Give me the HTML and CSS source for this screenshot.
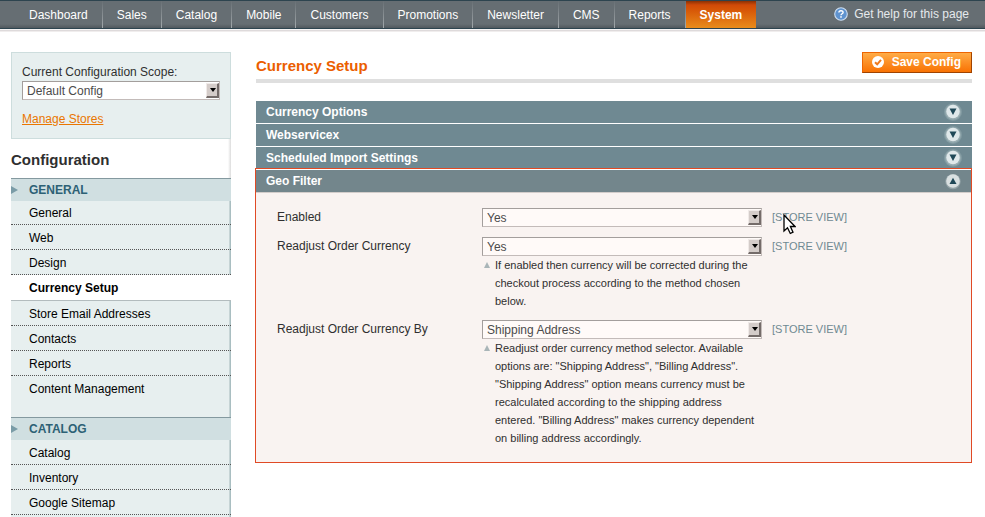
FILE: index.html
```html
<!DOCTYPE html>
<html lang="en">
<head>
<meta charset="utf-8">
<title>Currency Setup</title>
<link rel="stylesheet" href="styles.css">
</head>
<body>
<header class="topbar">
  <nav class="menu">
    <a href="#">Dashboard</a>
    <a href="#">Sales</a>
    <a href="#">Catalog</a>
    <a href="#">Mobile</a>
    <a href="#">Customers</a>
    <a href="#">Promotions</a>
    <a href="#">Newsletter</a>
    <a href="#">CMS</a>
    <a href="#">Reports</a>
    <a href="#" class="active">System</a>
  </nav>
  <a href="#" class="help">
    <svg width="14" height="14" viewBox="0 0 14 14" aria-hidden="true">
      <circle cx="7" cy="7" r="6.3" fill="#5f93cf" stroke="#cfdff0" stroke-width="1.1"/>
      <path d="M4.9 5.6C4.9 3.2 9.1 3.2 9.1 5.4C9.1 6.8 7 6.7 7 8.2" fill="none" stroke="#fff" stroke-width="1.4"/>
      <rect x="6.2" y="9.2" width="1.6" height="1.5" fill="#fff"/>
    </svg>
    Get help for this page
  </a>
</header>

<div class="page">
  <aside class="sidebar">
    <div class="scope">
      <label for="scope">Current Configuration Scope:</label>
      <span class="select"><select id="scope"><option>Default Config</option></select></span>
      <a href="#">Manage Stores</a>
    </div>
    <h3>Configuration</h3>
    <h4>GENERAL</h4>
    <ul>
      <li><a href="#">General</a></li>
      <li><a href="#">Web</a></li>
      <li><a href="#">Design</a></li>
      <li class="current"><a href="#">Currency Setup</a></li>
      <li><a href="#">Store Email Addresses</a></li>
      <li><a href="#">Contacts</a></li>
      <li><a href="#">Reports</a></li>
      <li class="last"><a href="#">Content Management</a></li>
    </ul>
    <h4>CATALOG</h4>
    <ul class="fill">
      <li><a href="#">Catalog</a></li>
      <li><a href="#">Inventory</a></li>
      <li><a href="#">Google Sitemap</a></li>
    </ul>
  </aside>

  <main class="main">
    <div class="heading">
      <h1>Currency Setup</h1>
      <button type="button" class="save">
        <svg width="12" height="12" viewBox="0 0 12 12" aria-hidden="true">
          <circle cx="6" cy="6" r="6" fill="#fff"/>
          <path d="M3 6.2L5.2 8.3L9 3.8" fill="none" stroke="#ef7a1c" stroke-width="2"/>
        </svg>
        Save Config
      </button>
    </div>

    <div class="sections">
      <button type="button" class="bar">Currency Options
        <svg width="18" height="18" viewBox="0 0 18 18" aria-hidden="true"><circle cx="9" cy="9" r="9" fill="#819aa1"/><circle cx="9" cy="9" r="7.8" fill="#99adb2"/><circle cx="9" cy="8.5" r="6.7" fill="#dfe8ea"/><path d="M5.5 5.5H12.5L9 12Z" fill="#1f4857"/></svg>
      </button>
      <button type="button" class="bar">Webservicex
        <svg width="18" height="18" viewBox="0 0 18 18" aria-hidden="true"><circle cx="9" cy="9" r="9" fill="#819aa1"/><circle cx="9" cy="9" r="7.8" fill="#99adb2"/><circle cx="9" cy="8.5" r="6.7" fill="#dfe8ea"/><path d="M5.5 5.5H12.5L9 12Z" fill="#1f4857"/></svg>
      </button>
      <button type="button" class="bar">Scheduled Import Settings
        <svg width="18" height="18" viewBox="0 0 18 18" aria-hidden="true"><circle cx="9" cy="9" r="9" fill="#819aa1"/><circle cx="9" cy="9" r="7.8" fill="#99adb2"/><circle cx="9" cy="8.5" r="6.7" fill="#dfe8ea"/><path d="M5.5 5.5H12.5L9 12Z" fill="#1f4857"/></svg>
      </button>
    </div>

    <section class="open">
      <button type="button" class="bar">Geo Filter
        <svg width="16" height="18" viewBox="0 0 16 18" aria-hidden="true"><circle cx="8" cy="9.6" r="7.7" fill="#94a4a8"/><circle cx="8" cy="9" r="6.8" fill="#d9e0e1"/><path d="M4.5 12H11.5L8 5.8Z" fill="#1f4857"/></svg>
      </button>
      <div class="fields">
        <label for="enabled">Enabled</label>
        <span class="select"><select id="enabled"><option>Yes</option><option>No</option></select></span>
        <span class="level">[STORE VIEW]
          <svg class="pointer" width="13" height="21" viewBox="0 0 13 21" aria-hidden="true"><path d="M1 1V17L4.5 13.8L7.3 19.5L10 18.2L7.4 12.5H12Z" fill="#fff" stroke="#000" stroke-width="1.3"/></svg>
        </span>

        <label for="readjust">Readjust Order Currency</label>
        <div>
          <span class="select"><select id="readjust"><option>Yes</option><option>No</option></select></span>
          <p class="note">If enabled then currency will be corrected during the checkout process according to the method chosen below.</p>
        </div>
        <span class="level">[STORE VIEW]</span>

        <label for="method">Readjust Order Currency By</label>
        <div>
          <span class="select"><select id="method"><option>Shipping Address</option><option>Billing Address</option></select></span>
          <p class="note">Readjust order currency method selector. Available options are: "Shipping Address", "Billing Address". "Shipping Address" option means currency must be recalculated according to the shipping address entered. "Billing Address" makes currency dependent on billing address accordingly.</p>
        </div>
        <span class="level">[STORE VIEW]</span>
      </div>
    </section>
  </main>
</div>
</body>
</html>
```
FILE: styles.css
```css
*, ::before, ::after {
  box-sizing: border-box;
}

body {
  display: flex;
  flex-direction: column;
  min-height: 100vh;
  margin: 0;
  background: #fff;
  color: #2f2f2f;
  font: 12px/18px "Liberation Sans", Arial, sans-serif;
}

h1, h3, h4, ul, p {
  margin: 0;
  padding: 0;
}

button, select {
  font: inherit;
  border-radius: 0;
}

.topbar {
  display: flex;
  justify-content: space-between;
  height: 29px;
  padding: 0 16px 0 15px;
  border-top: 1px solid #2d444f;
  border-bottom: 1px solid #2d444f;
  background: linear-gradient(#666e73 0 23px, #50585e);
  box-shadow: 0 1px #f6f4f4, 0 2px #dedadb, 0 3px #f0eded;
}

.topbar a {
  color: #fff;
  text-decoration: none;
}

.menu {
  display: flex;
}

.menu a {
  padding: 5px 14px 4px;
  border-right: 1px solid;
  border-image: linear-gradient(#666e73, #a5abae) 1;
}

.menu .active {
  border: 0;
  background: linear-gradient(#8a3104, #d04a08 4px, #d85a08 10px, #e98c1b);
  font-weight: bold;
}

.topbar .help {
  display: flex;
  gap: 6px;
  padding-top: 4px;
  color: #e5e9ec;
}

.help svg {
  margin-top: 2px;
}

.page {
  display: grid;
  flex: 1;
  grid-template-columns: 220px 1fr;
  gap: 24px;
  padding: 23px 13px 0 11px;
}

.sidebar {
  display: flex;
  flex-direction: column;
  background: linear-gradient(to right, #fff, #dcdcdc) right / 3px 100% no-repeat;
}

.scope {
  display: flex;
  flex-direction: column;
  align-items: flex-start;
  height: 87px;
  padding: 10px;
  border: 1px solid #cddddd;
  background: #e7efef;
}

.scope a {
  margin-top: 10px;
  color: #ea7601;
}

.select {
  position: relative;
  display: block;
  width: 100%;
  height: 19px;
}

.select select {
  display: block;
  width: 100%;
  height: 19px;
  padding: 0 16px 0 4px;
  border: 1px solid;
  border-color: #a39e9c #c3bbb9 #c3bbb9 #a39e9c;
  background: #fffaf8;
  color: #4b4b4b;
  line-height: 16px;
  appearance: none;
}

.scope .select select {
  background: #fff;
}

.select::before {
  content: "";
  position: absolute;
  top: 2px;
  right: 1px;
  width: 13px;
  height: 15px;
  border: 1px solid;
  border-width: 1px 2px 2px 1px;
  border-color: #f0eae8 #746b69 #746b69 #f0eae8;
  background: #d4ccc9;
  pointer-events: none;
}

.select::after {
  content: "";
  position: absolute;
  top: 7px;
  right: 4px;
  border: 3px solid transparent;
  border-top: 4px solid #000;
  border-bottom: 0;
  pointer-events: none;
}

.sidebar h3 {
  padding: 12px 0 9px;
  font-size: 15px;
}

.sidebar h4 {
  height: 23px;
  padding: 2px 0 2px 18px;
  border-top: 1px solid #84999f;
  background: #d0dfe1;
  color: #2d6175;
  font-size: 12px;
}

.sidebar h4::before {
  content: "";
  float: left;
  margin: 5px 0 0 -18px;
  border: 4px solid transparent;
  border-left: 7px solid #7a9ca7;
  border-right: 0;
}

.sidebar ul {
  padding-bottom: 17px;
  background: linear-gradient(to right, #c6d4d5 1px, #a9bec1 1px) right / 2px 100% no-repeat #e7efef;
  list-style: none;
}

.sidebar .fill {
  flex: 1;
  padding-bottom: 0;
}

.sidebar li {
  height: 25px;
  padding: 4px 0 2px 18px;
  border-bottom: 1px dotted #555;
}

.sidebar li:first-child {
  height: 24px;
  padding-top: 3px;
}

.sidebar .fill li:first-child {
  height: 25px;
  padding-top: 4px;
}

.sidebar li a {
  color: #000;
  text-decoration: none;
}

.sidebar .current {
  height: 26px;
  border-bottom: 1px solid #b3bcbe;
  background: #fff;
  font-weight: bold;
}

.sidebar .last {
  height: 24px;
  border: 0;
}

.heading {
  display: flex;
  align-items: flex-start;
  justify-content: space-between;
  height: 31px;
  margin: 0 0 18px 1px;
  border-bottom: 4px solid #dfdfdf;
}

h1 {
  padding-top: 5px;
  color: #eb5e00;
  font-size: 15px;
  line-height: 18px;
}

.save {
  display: flex;
  align-items: center;
  gap: 8px;
  height: 21px;
  padding: 0 10px 1px 9px;
  border: 1px solid;
  border-color: #ed6502 #a04300 #a04300 #ed6502;
  background: linear-gradient(#ffac47, #f97203);
  color: #fff;
  font-weight: bold;
}

.sections {
  display: grid;
  gap: 1px;
  margin-left: 1px;
}

.bar {
  display: flex;
  align-items: center;
  justify-content: space-between;
  width: 100%;
  height: 22px;
  padding: 0 10px;
  border: 0;
  background: #6f8992;
  color: #fff;
  font-weight: bold;
}

.sections .bar:last-child {
  height: 21px;
}

.open {
  padding-top: 1px;
  border: 1px solid #e04a25;
  background: #fff;
}

.open .bar {
  background: #73868c;
}

.fields {
  display: grid;
  grid-template-columns: 195px 280px 1fr;
  gap: 10px;
  padding: 15px 20px 15px 21px;
  border-top: 1px solid #d3cdcb;
  background: #f9f3f1;
}

.note {
  padding-left: 13px;
  font-size: 11px;
}

.note::before {
  content: "";
  float: left;
  margin: 6px 0 0 -11px;
  border: 3px solid transparent;
  border-top: 0;
  border-bottom: 6px solid #a9b5b8;
}

.level {
  position: relative;
  color: #6f8992;
  font-size: 11px;
}

.pointer {
  position: absolute;
  top: 6px;
  left: 11px;
}
```
